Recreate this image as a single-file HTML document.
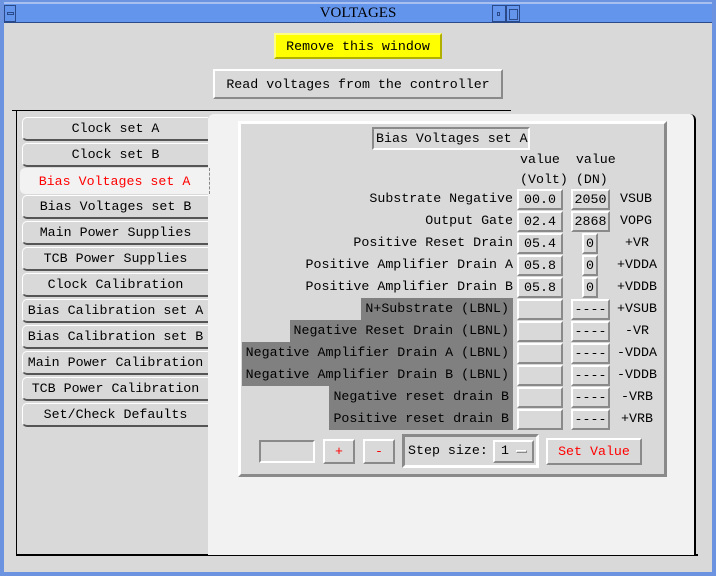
<!DOCTYPE html>
<html><head><meta charset="utf-8"><style>
*{box-sizing:border-box;margin:0;padding:0}
body{width:716px;height:576px;background:#d9d9d9;position:relative;overflow:hidden;font-family:"Liberation Mono","DejaVu Sans Mono",monospace;font-size:13.3px;color:#000}
.a{position:absolute}
.r{border-style:solid;border-width:2px;border-color:#fff #8a8a8a #8a8a8a #fff;background:#d9d9d9}
.s{border-style:solid;border-width:2px;border-color:#8a8a8a #fff #fff #8a8a8a;background:#d9d9d9}
.c{display:flex;align-items:center;justify-content:center;white-space:pre}
.tab{left:22px;width:186px;height:24px;border-style:solid;border-width:1px 0 2px 1px;border-color:#fff #000 #555 #fff;border-radius:5px 0 0 5px;background:#d9d9d9}
.lab{right:203px;height:22px;text-align:right;white-space:pre;line-height:22px}
.dk{background:#808080;padding:0 4px}
.v{left:517px;width:46px;height:21px}
.d{height:21px}
.sf{left:614px;width:46px;text-align:center;line-height:22px;height:22px}
</style></head><body>
<!-- window frame -->
<div class="a" style="left:0;top:0;width:716px;height:576px;border:4px solid #6b93e0;border-top-width:2px"></div>
<div class="a" style="left:4px;top:2px;width:708px;height:2px;background:#a8c0f0"></div>
<div class="a" style="left:4px;top:4px;width:708px;height:19px;background:#6495ed;border-bottom:1px solid #2a4a8a"></div>
<div class="a c" style="left:4px;top:4px;width:708px;height:19px;font-family:'Liberation Serif',serif;font-size:15px">VOLTAGES</div>
<div class="a" style="left:4px;top:5px;width:12px;height:17px;border:1px solid #2a4a8a"></div>
<div class="a" style="left:7px;top:12px;width:7px;height:3px;border:1px solid #2a4a8a"></div>
<div class="a" style="left:492px;top:5px;width:14px;height:17px;border:1px solid #2a4a8a"></div>
<div class="a" style="left:497px;top:12px;width:3px;height:4px;border:1px solid #2a4a8a"></div>
<div class="a" style="left:506px;top:5px;width:14px;height:17px;border:1px solid #2a4a8a"></div>
<div class="a" style="left:509px;top:9px;width:9px;height:11px;border:1px solid #2a4a8a"></div>

<div class="a c" style="left:274px;top:33px;width:168px;height:26px;background:#ffff00;border:2px solid;border-color:#ffff80 #b0b000 #b0b000 #ffff80">Remove this window</div>
<div class="a c r" style="left:213px;top:69px;width:290px;height:30px">Read voltages from the controller</div>

<!-- notebook -->
<div class="a" style="left:12px;top:110px;width:499px;height:1px;background:#000"></div>
<div class="a" style="left:16px;top:110px;width:1px;height:445px;background:#000"></div>
<div class="a" style="left:16px;top:554px;width:682px;height:2px;background:#000"></div>
<div class="a" style="left:208px;top:114px;width:488px;height:441px;background:#f2f2f2;border-right:2px solid #000;border-radius:6px 6px 0 0"></div>

<div class="a tab c" style="top:117px">Clock set A</div>
<div class="a tab c" style="top:143px">Clock set B</div>
<div class="a c" style="left:20px;top:168px;width:190px;height:26px;background:#f2f2f2;color:#f00;border-radius:5px 0 0 5px;border-right:1px dashed #888">Bias Voltages set A</div>
<div class="a tab c" style="top:195px">Bias Voltages set B</div>
<div class="a tab c" style="top:221px">Main Power Supplies</div>
<div class="a tab c" style="top:247px">TCB Power Supplies</div>
<div class="a tab c" style="top:273px">Clock Calibration</div>
<div class="a tab c" style="top:299px">Bias Calibration set A</div>
<div class="a tab c" style="top:325px">Bias Calibration set B</div>
<div class="a tab c" style="top:351px">Main Power Calibration</div>
<div class="a tab c" style="top:377px">TCB Power Calibration</div>
<div class="a tab c" style="top:403px">Set/Check Defaults</div>

<!-- inner frame -->
<div class="a r" style="left:238px;top:121px;width:429px;height:356px;border-width:3px"></div>
<div class="a s" style="left:372px;top:127px;width:158px;height:23px;padding-left:2px;line-height:19px">Bias Voltages set A</div>
<div class="a" style="left:520px;top:150px;line-height:20px;white-space:pre">value  value
(Volt) (DN)</div>

<div class="a lab" style="top:188px">Substrate Negative</div>
<div class="a lab" style="top:210px">Output Gate</div>
<div class="a lab" style="top:232px">Positive Reset Drain</div>
<div class="a lab" style="top:254px">Positive Amplifier Drain A</div>
<div class="a lab" style="top:276px">Positive Amplifier Drain B</div>
<div class="a lab dk" style="top:298px">N+Substrate (LBNL)</div>
<div class="a lab dk" style="top:320px">Negative Reset Drain (LBNL)</div>
<div class="a lab dk" style="top:342px">Negative Amplifier Drain A (LBNL)</div>
<div class="a lab dk" style="top:364px">Negative Amplifier Drain B (LBNL)</div>
<div class="a lab dk" style="top:386px">Negative reset drain B</div>
<div class="a lab dk" style="top:408px">Positive reset drain B</div>

<div class="a v r c" style="top:189px">00.0</div>
<div class="a v r c" style="top:211px">02.4</div>
<div class="a v r c" style="top:233px">05.4</div>
<div class="a v r c" style="top:255px">05.8</div>
<div class="a v r c" style="top:277px">05.8</div>
<div class="a v r" style="top:299px"></div>
<div class="a v r" style="top:321px"></div>
<div class="a v r" style="top:343px"></div>
<div class="a v r" style="top:365px"></div>
<div class="a v r" style="top:387px"></div>
<div class="a v r" style="top:409px"></div>

<div class="a d r c" style="left:571px;width:39px;top:189px">2050</div>
<div class="a d r c" style="left:571px;width:39px;top:211px">2868</div>
<div class="a d r c" style="left:582px;width:16px;top:233px">0</div>
<div class="a d r c" style="left:582px;width:16px;top:255px">0</div>
<div class="a d r c" style="left:582px;width:16px;top:277px">0</div>
<div class="a d r c" style="left:571px;width:39px;top:299px">----</div>
<div class="a d r c" style="left:571px;width:39px;top:321px">----</div>
<div class="a d r c" style="left:571px;width:39px;top:343px">----</div>
<div class="a d r c" style="left:571px;width:39px;top:365px">----</div>
<div class="a d r c" style="left:571px;width:39px;top:387px">----</div>
<div class="a d r c" style="left:571px;width:39px;top:409px">----</div>

<div class="a sf" style="top:188px;left:612px;width:48px">VSUB</div>
<div class="a sf" style="top:210px;left:612px;width:48px">VOPG</div>
<div class="a sf" style="top:232px">+VR</div>
<div class="a sf" style="top:254px">+VDDA</div>
<div class="a sf" style="top:276px">+VDDB</div>
<div class="a sf" style="top:298px">+VSUB</div>
<div class="a sf" style="top:320px">-VR</div>
<div class="a sf" style="top:342px">-VDDA</div>
<div class="a sf" style="top:364px">-VDDB</div>
<div class="a sf" style="top:386px">-VRB</div>
<div class="a sf" style="top:408px">+VRB</div>

<!-- bottom controls -->
<div class="a s" style="left:259px;top:440px;width:56px;height:23px"></div>
<div class="a r c" style="left:323px;top:439px;width:32px;height:25px;color:#f00">+</div>
<div class="a r c" style="left:363px;top:439px;width:32px;height:25px;color:#f00">-</div>
<div class="a s" style="left:402px;top:434px;width:137px;height:34px;border-width:3px"></div>
<div class="a" style="left:408px;top:441px;line-height:20px;white-space:pre">Step size:</div>
<div class="a r" style="left:493px;top:440px;width:41px;height:23px;padding-left:6px;line-height:18px">1</div>
<div class="a" style="left:516px;top:450px;width:11px;height:3px;border:1px solid;border-color:#fff #8a8a8a #8a8a8a #fff"></div>
<div class="a r c" style="left:546px;top:438px;width:96px;height:27px;color:#f00">Set Value</div>
</body></html>
